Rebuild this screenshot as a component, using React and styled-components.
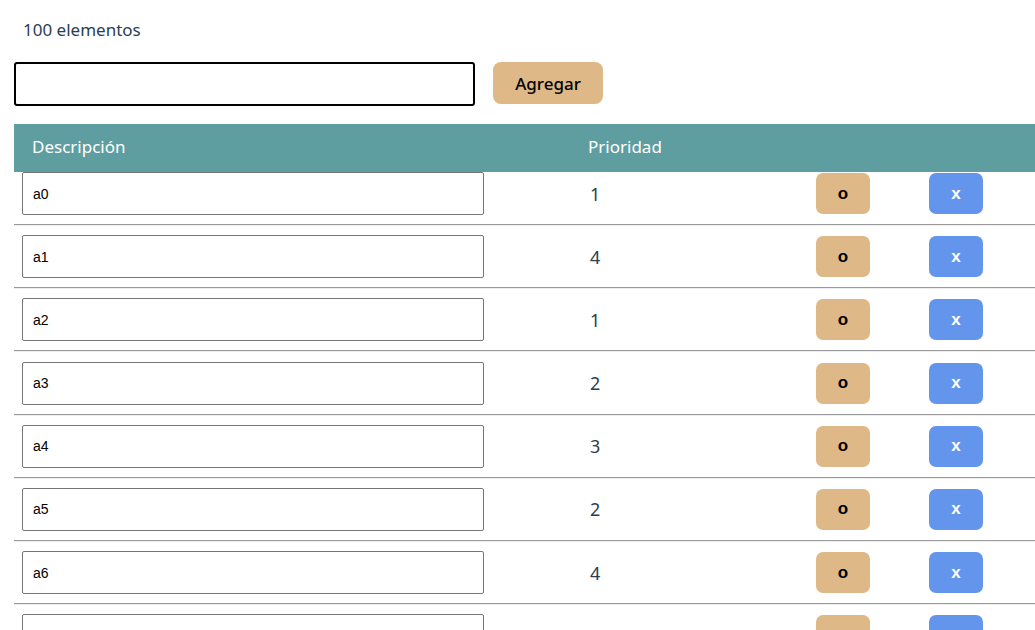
import React, { useState } from 'react';
import styled, { createGlobalStyle } from 'styled-components';

const GlobalStyle = createGlobalStyle`
  html, body {
    margin: 0;
    padding: 0;
    background: #ffffff;
    overflow: hidden;
  }
  body {
    font-family: "Noto Sans", "Open Sans", sans-serif;
    color: #2c3e50;
  }
`;

const Page = styled.div`
  padding-left: 14px;
`;

const Count = styled.div`
  margin: 0;
  padding: 19px 0 0 9px;
  font-size: 17px;
  line-height: 22px;
  color: #2c3e50;
`;

const Form = styled.div`
  display: flex;
  align-items: flex-start;
  gap: 18px;
  margin-top: 21px;
`;

const NewInput = styled.input`
  box-sizing: border-box;
  width: 461px;
  height: 44px;
  border: 2px solid #000;
  border-radius: 3px;
  padding: 0 8px;
  font-family: "Liberation Sans", Arial, sans-serif;
  font-size: 14px;
  outline: none;
`;

const AddButton = styled.button`
  box-sizing: border-box;
  width: 110px;
  height: 42px;
  border: none;
  border-radius: 8px;
  background: #deb887;
  color: #000;
  font-family: "Noto Sans", "Open Sans", sans-serif;
  font-size: 17px;
  font-weight: 500;
  cursor: pointer;
`;

const grid = `
  display: grid;
  grid-template-columns: 560px 228px 113px 1fr;
  align-items: center;
`;

const HeaderRow = styled.div`
  ${grid}
  box-sizing: border-box;
  margin-top: 18px;
  height: 48px;
  padding-bottom: 3px;
  background: #5f9ea0;
  color: #ffffff;
  font-size: 17px;
`;

const HeaderCell = styled.div`
  padding-left: ${p => p.$pad}px;
`;

const Row = styled.div`
  ${grid}
  height: 43px;
  padding-top: ${p => (p.$first ? 0 : 9.2)}px;
`;

const Cell = styled.div`
  padding-left: ${p => p.$pad}px;
  font-size: 18px;
`;

const ItemInput = styled.input`
  box-sizing: border-box;
  width: 462px;
  height: 43px;
  border: 1px solid #767676;
  border-radius: 2px;
  padding: 0 10px;
  font-family: "Liberation Sans", Arial, sans-serif;
  font-size: 14px;
  color: #000;
  outline: none;
`;

const Separator = styled.hr`
  margin: 9px 0 0 0;
  border: none;
  border-top: 1px solid #9a9a9a;
  border-bottom: 1px solid #eeeeee;
`;

const ActionButton = styled.button`
  width: 54px;
  height: 41px;
  border: none;
  border-radius: 7px;
  background: ${p => (p.$remove ? '#6495ed' : '#deb887')};
  color: ${p => (p.$remove ? '#ffffff' : '#000000')};
  font-family: "Liberation Sans", Arial, sans-serif;
  font-size: 17px;
  font-weight: 700;
  cursor: pointer;
`;

const initial = [1, 4, 1, 2, 3, 2, 4, 3].map((p, i) => ({ id: i, text: 'a' + i, priority: p }));

export default function App() {
  const [items] = useState(initial);

  return (
    <Page>
      <GlobalStyle />
      <Count>100 elementos</Count>
      <Form>
        <NewInput />
        <AddButton>Agregar</AddButton>
      </Form>
      <HeaderRow>
        <HeaderCell $pad={18}>Descripción</HeaderCell>
        <HeaderCell $pad={14}>Prioridad</HeaderCell>
        <HeaderCell />
        <HeaderCell />
      </HeaderRow>
      {items.map((item, i) => (
        <React.Fragment key={item.id}>
          <Row $first={i === 0}>
            <Cell $pad={8}>
              <ItemInput defaultValue={item.text} />
            </Cell>
            <Cell $pad={16}>{item.priority}</Cell>
            <Cell $pad={14}>
              <ActionButton>o</ActionButton>
            </Cell>
            <Cell $pad={14}>
              <ActionButton $remove>x</ActionButton>
            </Cell>
          </Row>
          <Separator />
        </React.Fragment>
      ))}
    </Page>
  );
}
